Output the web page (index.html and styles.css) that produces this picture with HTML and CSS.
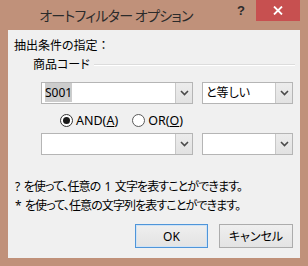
FILE: index.html
```html
<!DOCTYPE html>
<html lang="ja">
<head>
<meta charset="utf-8">
<title>オートフィルター オプション</title>
<link rel="stylesheet" href="styles.css">
</head>
<body>
<div class="window">
  <div class="titlebar">
    <div class="title">オートフィルター オプション</div>
    <div class="help">?</div>
    <div class="close">
      <svg width="10" height="9" viewBox="0 0 10 9"><path d="M1 0.5 L9 8.5 M9 0.5 L1 8.5" stroke="#fff" stroke-width="1.8" fill="none"/></svg>
    </div>
  </div>
  <div class="client">
    <div class="label jp">抽出条件の指定<span class="colon">：</span></div>
    <div class="group"><span class="jp">商品コード</span><span class="rule"></span></div>
    <div class="row">
      <div class="combo wide">
        <span class="value"><span class="sel">S001</span></span>
        <span class="btn"><svg width="9" height="6" viewBox="0 0 9 6"><path d="M1 1 L4.5 4.5 L8 1" stroke="#4a4a4a" stroke-width="1.6" fill="none"/></svg></span>
      </div>
      <div class="combo narrow">
        <span class="value jp">と等しい</span>
        <span class="btn"><svg width="9" height="6" viewBox="0 0 9 6"><path d="M1 1 L4.5 4.5 L8 1" stroke="#4a4a4a" stroke-width="1.6" fill="none"/></svg></span>
      </div>
    </div>
    <div class="radios">
      <div class="radio"><span class="dot checked"></span><span>AND(<u>A</u>)</span></div>
      <div class="radio"><span class="dot"></span><span>OR(<u>O</u>)</span></div>
    </div>
    <div class="row">
      <div class="combo wide">
        <span class="value"></span>
        <span class="btn"><svg width="9" height="6" viewBox="0 0 9 6"><path d="M1 1 L4.5 4.5 L8 1" stroke="#4a4a4a" stroke-width="1.6" fill="none"/></svg></span>
      </div>
      <div class="combo narrow">
        <span class="value"></span>
        <span class="btn"><svg width="9" height="6" viewBox="0 0 9 6"><path d="M1 1 L4.5 4.5 L8 1" stroke="#4a4a4a" stroke-width="1.6" fill="none"/></svg></span>
      </div>
    </div>
    <div class="hints jp">
      <p>? を使って、任意の 1 文字を表すことができます。</p>
      <p>* を使って、任意の文字列を表すことができます。</p>
    </div>
    <div class="buttons">
      <div class="button default">OK</div>
      <div class="button jp">キャンセル</div>
    </div>
  </div>
</div>
</body>
</html>
```

FILE: styles.css
```css
html, body {
  margin: 0;
  padding: 0;
}
body {
  width: 308px;
  height: 266px;
  overflow: hidden;
  font-family: "Noto Sans", "Noto Sans CJK JP", sans-serif;
  font-size: 12px;
  color: #000;
}
.jp {
  font-feature-settings: "palt";
}
.window {
  width: 308px;
  height: 266px;
  background: #c0917a;
  display: flex;
  flex-direction: column;
}
.titlebar {
  height: 30px;
  display: flex;
  align-items: flex-start;
  flex: none;
}
.title {
  flex: 1;
  text-align: center;
  font-family: "Noto Sans CJK JP", sans-serif;
  font-feature-settings: "palt";
  font-size: 14px;
  line-height: 30px;
  color: #2b2b2b;
  letter-spacing: -0.7px;
}
.help {
  width: 18px;
  margin-right: 6px;
  text-align: center;
  font-family: "Liberation Sans", sans-serif;
  font-weight: bold;
  font-size: 13px;
  line-height: 22px;
  color: #2b2b2b;
}
.close {
  width: 44px;
  height: 21px;
  margin-right: 8px;
  background: #c75050;
  display: flex;
  align-items: center;
  justify-content: center;
}
.client {
  flex: 1;
  margin: 0 8px 8px;
  background: #f0f0f0;
  padding: 6px 7px 0 6px;
  display: flex;
  flex-direction: column;
}
.label {
  line-height: 20px;
  height: 20px;
}
.colon {
  font-feature-settings: normal;
}
.group {
  height: 18px;
  display: flex;
  align-items: center;
  padding-left: 19px;
  line-height: 18px;
}
.rule {
  flex: 1;
  height: 0;
  border-top: 1px solid #dcdcdc;
  border-bottom: 1px solid #ffffff;
  margin-left: 4px;
  margin-right: -2px;
}
.row {
  display: flex;
  margin-left: 27px;
  gap: 9px;
  height: 22px;
}
.client > .row:nth-child(3) {
  margin-top: 8px;
}
.combo {
  box-sizing: border-box;
  height: 22px;
  border: 1px solid #b5b5b5;
  background: #fff;
  display: flex;
}
.combo.wide {
  width: 152px;
}
.combo.narrow {
  width: 91px;
}
.value {
  flex: 1;
  padding-left: 3px;
  line-height: 20px;
  white-space: nowrap;
}
.sel {
  background: #cccccc;
  padding: 1px 0;
}
.btn {
  box-sizing: border-box;
  width: 17px;
  border-left: 1px solid #c8c8c8;
  background: linear-gradient(#ececec, #e2e2e2);
  display: flex;
  align-items: center;
  justify-content: center;
}
.radios {
  display: flex;
  align-items: center;
  padding: 10px 0 6px 46px;
  height: 13px;
}
.radio {
  display: flex;
  align-items: center;
  margin-right: 14px;
  line-height: 13px;
  font-size: 12.5px;
}
.dot {
  box-sizing: border-box;
  width: 13px;
  height: 13px;
  border-radius: 50%;
  border: 1px solid #5a5a5a;
  background: #fff;
  margin-right: 3px;
  display: flex;
  align-items: center;
  justify-content: center;
}
.dot.checked {
  border-color: #333;
}
.dot.checked::after {
  content: "";
  width: 7px;
  height: 7px;
  border-radius: 50%;
  background: #1a1a1a;
}
.hints {
  margin-top: 22px;
  margin-left: 1px;
  letter-spacing: -0.9px;
  word-spacing: 2px;
}
.hints p {
  margin: 0;
  line-height: 19px;
  white-space: nowrap;
}
.buttons {
  margin-top: 9px;
  display: flex;
  justify-content: flex-end;
  gap: 11px;
}
.button {
  box-sizing: border-box;
  width: 74px;
  height: 24px;
  border: 1px solid #acacac;
  background: linear-gradient(#efefef, #e3e3e3);
  display: flex;
  align-items: center;
  justify-content: center;
  font-size: 12px;
}
.button.default {
  width: 73px;
  border-color: #4f95d9;
  box-shadow: inset 0 0 0 1px #cfe3f6;
}
```
